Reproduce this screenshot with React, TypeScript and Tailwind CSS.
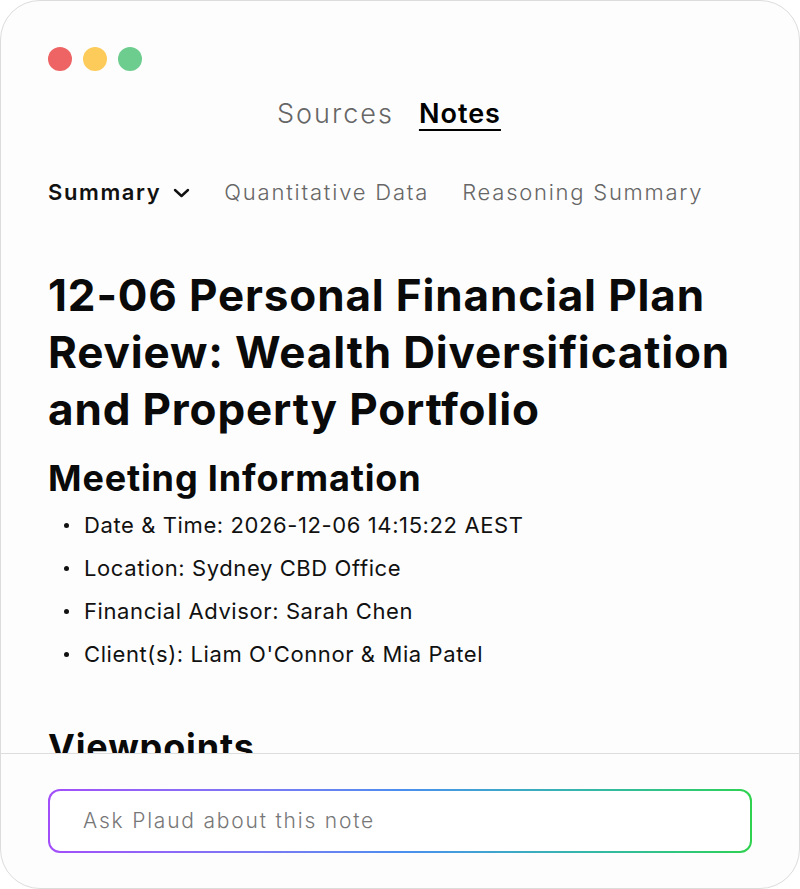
export default function App() {
  const info = [
    "Date & Time: 2026-12-06 14:15:22 AEST",
    "Location: Sydney CBD Office",
    "Financial Advisor: Sarah Chen",
    "Client(s): Liam O'Connor & Mia Patel",
  ];

  return (
    <div className="h-[889px] w-[800px] bg-white font-['Inter',sans-serif] text-[#111]">
      <div className="flex h-full flex-col overflow-hidden rounded-[40px] border border-[#dcdcdc] bg-[#fdfdfd]">
        <div className="flex-1 overflow-hidden px-[47px] pt-[46px]">
          <div className="flex gap-[11px]">
            <span className="h-6 w-6 rounded-full bg-[#ee6464]" />
            <span className="h-6 w-6 rounded-full bg-[#fdcb5a]" />
            <span className="h-6 w-6 rounded-full bg-[#6dcd8e]" />
          </div>

          <nav className="mt-[25px] flex justify-center gap-[25px] pr-[22px] text-[27px] leading-[36px]">
            <span className="font-light tracking-[2px] text-[#666]">Sources</span>
            <span className="font-semibold tracking-[1px] text-black underline decoration-2 underline-offset-[6px]">
              Notes
            </span>
          </nav>

          <div className="mt-[44px] flex items-center text-[22px] leading-[32px]">
            <span className="font-semibold tracking-[1.6px] text-[#111]">Summary</span>
            <svg
              className="ml-[12px] mt-[2px] h-[10px] w-[17px]"
              viewBox="0 0 17 10"
              fill="none"
              stroke="#111"
              strokeWidth="2.4"
              strokeLinecap="round"
              strokeLinejoin="round"
            >
              <path d="M2 2l6.5 6 6.5-6" />
            </svg>
            <span className="ml-[34px] font-light tracking-[1.8px] text-[#666]">Quantitative Data</span>
            <span className="ml-[33px] font-light tracking-[1.75px] text-[#666]">Reasoning Summary</span>
          </div>

          <h1 className="mt-[59px] text-[44px] font-bold leading-[57px] tracking-[0.85px] text-[#0a0a0a]">
            12-06 Personal Financial Plan
            <br />
            Review: Wealth Diversification
            <br />
            and Property Portfolio
          </h1>

          <h2 className="mt-[15px] text-[36px] font-bold leading-[50px] tracking-[0.85px] text-[#0a0a0a]">
            Meeting Information
          </h2>

          <ul className="mt-[1px] pl-[36px] text-[22px] leading-[43px] tracking-[0.6px] text-[#111]">
            {info.map((item) => (
              <li key={item} className="relative">
                <span className="absolute -left-[20px] top-[19px] h-[5px] w-[5px] rounded-full bg-[#111]" />
                {item}
              </li>
            ))}
          </ul>

          <h2 className="mt-[46px] text-[36px] font-bold leading-[50px] tracking-[0.85px] text-[#0a0a0a]">
            Viewpoints
          </h2>
        </div>

        <div className="border-t border-[#dddddd] px-[47px] pt-[35px] pb-[35px]">
          <div className="rounded-[12px] bg-gradient-to-r from-[#a24dfa] via-[#4b8ef0] to-[#2fd24e] p-[2px]">
            <div className="flex h-[60px] items-center rounded-[10px] bg-white px-[33px]">
              <span className="text-[21px] font-light tracking-[1.8px] text-[#777]">Ask Plaud about this note</span>
            </div>
          </div>
        </div>
      </div>
    </div>
  );
}
